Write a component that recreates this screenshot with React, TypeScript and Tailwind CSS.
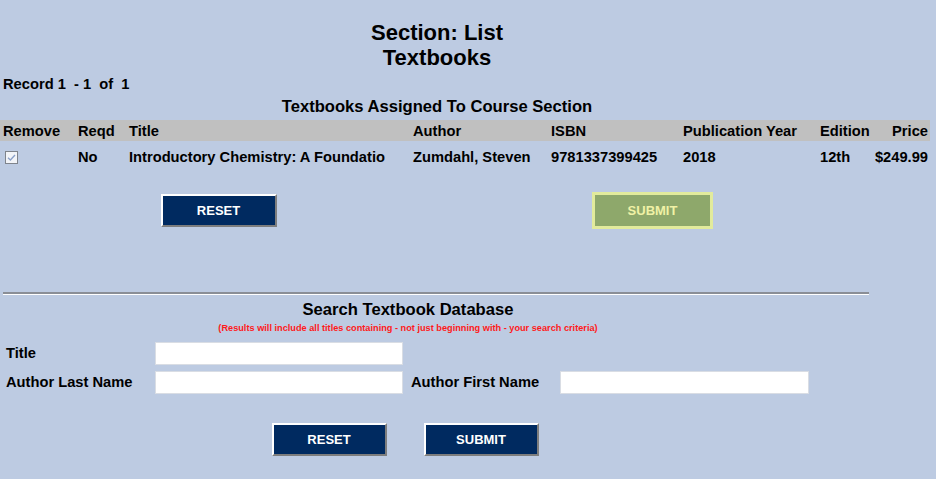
import React from 'react'

const cols = 'grid grid-cols-[75px_51px_284px_138px_132px_137px_57px_56px]'

function NavyButton({ label, w }: { label: string; w: string }) {
  return (
    <button
      type="button"
      className={`${w} flex items-center justify-center border-2 border-t-white border-l-white border-b-[#7d7d7d] border-r-[#7d7d7d] bg-[#002a60] text-[13px] font-bold text-white`}
    >
      {label}
    </button>
  )
}

function Field({ w }: { w: string }) {
  return <input type="text" className={`${w} h-[23px] border border-[#d9dde4] bg-white outline-none`} />
}

export default function App() {
  return (
    <div className="min-h-screen w-[936px] bg-[#bdcbe2] font-['Liberation_Sans',Arial,sans-serif] text-black">
      <div className="w-[874px] pt-[20px] text-center text-[22px] font-bold leading-[25px]">
        <div>Section: List</div>
        <div>Textbooks</div>
      </div>

      <div className="mt-[6px] whitespace-pre pl-[3px] text-[14.7px] font-bold leading-[16px]">
        {'Record 1  - 1  of  1'}
      </div>

      <div className="mt-[6px] w-[874px] text-center text-[16.6px] font-bold leading-[18px]">
        Textbooks Assigned To Course Section
      </div>

      <div className="mt-[4px] w-[930px] text-[14.7px] font-bold">
        <div className={`${cols} h-[21px] items-center bg-[#c0c0c0]`}>
          <div className="pl-[3px]">Remove</div>
          <div className="pl-[3px]">Reqd</div>
          <div className="pl-[3px]">Title</div>
          <div className="pl-[3px]">Author</div>
          <div className="pl-[3px]">ISBN</div>
          <div className="pl-[3px]">Publication Year</div>
          <div className="pl-[3px]">Edition</div>
          <div className="pr-[2px] text-right">Price</div>
        </div>
        <div className={`${cols} h-[33px] items-center`}>
          <div className="pl-[5px]">
            <svg width="13" height="13" viewBox="0 0 13 13" className="block">
              <rect x="0.5" y="0.5" width="12" height="12" fill="#f2f4f8" stroke="#7f848c" />
              <path d="M3 6.8 L5.4 9 L10 4" fill="none" stroke="#8aa0c8" strokeWidth="1.3" />
            </svg>
          </div>
          <div className="pl-[3px]">No</div>
          <div className="overflow-hidden whitespace-nowrap pl-[3px]">Introductory Chemistry: A Foundatio</div>
          <div className="pl-[3px]">Zumdahl, Steven</div>
          <div className="pl-[3px]">9781337399425</div>
          <div className="pl-[3px]">2018</div>
          <div className="pl-[3px]">12th</div>
          <div className="pr-[2px] text-right">$249.99</div>
        </div>
      </div>

      <div className="mt-[20px] grid w-[874px] grid-cols-2">
        <div className="flex justify-center">
          <NavyButton label="RESET" w="w-[116px] h-[33px]" />
        </div>
        <div className="flex justify-center pr-[6px]">
          <button
            type="button"
            className="mt-[-2px] flex h-[37px] w-[121px] items-center justify-center border-[3px] border-[#e2eb9c] bg-[#8ea86b] text-[13px] font-bold text-[#f0f2a6]"
          >
            SUBMIT
          </button>
        </div>
      </div>

      <div className="ml-[3px] mt-[63px] h-[3px] w-[866px] border-t-2 border-b border-t-[#8a8e96] border-b-white" />

      <div className="w-[816px]">
        <div className="mt-[6px] text-center text-[16.6px] font-bold leading-[18px]">Search Textbook Database</div>
        <div className="mt-[3px] text-center text-[9.2px] font-bold leading-[12px] text-[#ff1a1a]">
          (Results will include all titles containing - not just beginning with - your search criteria)
        </div>

        <div className="mt-[8px] flex flex-col gap-[6px] text-[14.7px] font-bold">
          <div className="flex h-[23px] items-center">
            <div className="w-[155px] pl-[6px]">Title</div>
            <Field w="w-[248px]" />
          </div>
          <div className="flex h-[23px] items-center">
            <div className="w-[155px] pl-[6px]">Author Last Name</div>
            <Field w="w-[248px]" />
            <div className="w-[157px] pl-[8px]">Author First Name</div>
            <Field w="w-[249px]" />
          </div>
        </div>

        <div className="mt-[29px] flex justify-center gap-[37px] pr-[6px]">
          <NavyButton label="RESET" w="w-[115px] h-[33px]" />
          <NavyButton label="SUBMIT" w="w-[115px] h-[33px]" />
        </div>
      </div>
    </div>
  )
}
